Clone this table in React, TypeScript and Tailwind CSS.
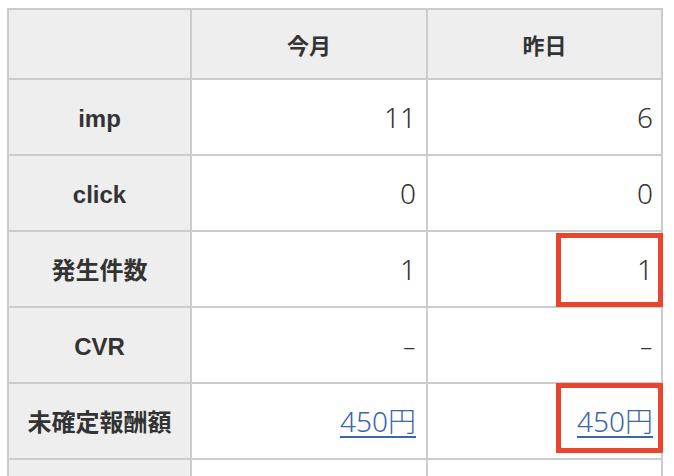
import React from "react";

const font = { fontFamily: '"Noto Sans CJK JP", "Noto Sans", sans-serif' };
const numFont = { fontFamily: '"Noto Sans", "Noto Sans CJK JP", sans-serif' };
const labelFont = { fontFamily: '"Liberation Sans", "Noto Sans CJK JP", sans-serif' };

type Row = { label: string; a: string; b: string; link?: boolean; hl?: "r1" | "r2" };

const rows: Row[] = [
  { label: "imp", a: "11", b: "6" },
  { label: "click", a: "0", b: "0" },
  { label: "発生件数", a: "1", b: "1", hl: "r1" },
  { label: "CVR", a: "-", b: "-" },
  { label: "未確定報酬額", a: "450円", b: "450円", link: true, hl: "r2" },
];

function Val({ v, link }: { v: string; link?: boolean }) {
  if (link)
    return (
      <a href="#" className="text-[#3b66a8] underline underline-offset-[4px] decoration-[1.5px]">{v}</a>
    );
  if (v === "-") return <span className="inline-block origin-right scale-x-150">{v}</span>;
  return <span>{v}</span>;
}

export default function App() {
  return (
    <div className="bg-white w-[674px] h-[476px] overflow-hidden" style={font}>
      <div className="pl-[7px] pt-[8px]">
        <div className="grid grid-cols-[181px_234px_233px] gap-[2px] p-[2px] bg-[#cccccc] w-fit text-[#333333]">
          <div className="bg-[#eeeeee] h-[68px]" />
          <div className="bg-[#eeeeee] h-[68px] flex items-center justify-center font-bold text-[22px]">今月</div>
          <div className="bg-[#eeeeee] h-[68px] flex items-center justify-center font-bold text-[22px]">昨日</div>
          {rows.map((r) => (
            <React.Fragment key={r.label}>
              <div
                className="bg-[#eeeeee] h-[74px] flex items-center justify-center pt-[4px] font-bold text-[24px]"
                style={labelFont}
              >
                {r.label}
              </div>
              <div
                className="bg-white h-[74px] flex items-center justify-end pr-[10px] text-[28px] font-light"
                style={numFont}
              >
                <Val v={r.a} link={r.link} />
              </div>
              <div
                className="relative bg-white h-[74px] flex items-center justify-end pr-[8px] text-[28px] font-light"
                style={numFont}
              >
                <Val v={r.b} link={r.link} />
                {r.hl === "r1" && (
                  <div className="absolute left-[128px] right-[-2px] top-[1px] bottom-[-1px] border-[5px] border-[#e8452c]" />
                )}
                {r.hl === "r2" && (
                  <div className="absolute left-[128px] right-[-2px] top-[-1px] bottom-[5px] border-[5px] border-[#e8452c]" />
                )}
              </div>
            </React.Fragment>
          ))}
          <div className="bg-[#eeeeee] h-[74px]" />
          <div className="bg-white h-[74px]" />
          <div className="bg-white h-[74px]" />
        </div>
      </div>
    </div>
  );
}
